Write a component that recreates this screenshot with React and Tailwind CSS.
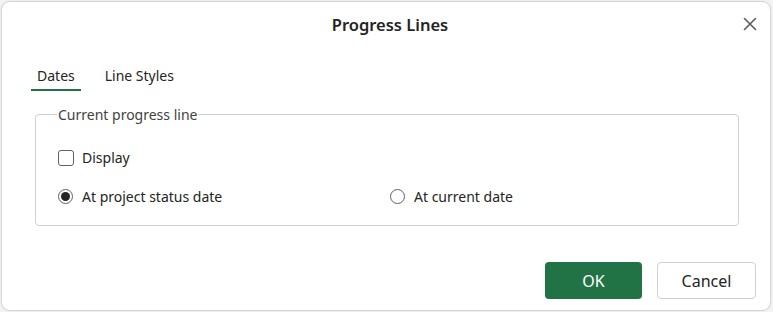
import React from 'react';

const font = { fontFamily: '"Segoe UI", "Noto Sans", "Liberation Sans", sans-serif' };

function Radio({ checked, label }) {
  return (
    <label className="flex items-center gap-[9px]">
      <span className="w-[15px] h-[15px] rounded-full border border-[#616161] flex items-center justify-center">
        {checked && <span className="w-[9px] h-[9px] rounded-full bg-[#242424]" />}
      </span>
      <span className="text-[14px] text-[#242424]">{label}</span>
    </label>
  );
}

export default function App() {
  return (
    <div className="w-[773px] h-[312px] bg-[#f3f3f3] p-[2px] pr-[3px] pb-[2px]" style={font}>
      <div className="h-full bg-white rounded-[8px] shadow-[0_0_0_1px_#d6d6d6,0_0_3px_rgba(0,0,0,0.15)] flex flex-col">
        <div className="relative h-[47px] flex items-center justify-center pl-[8px]">
          <span className="text-[16.5px] font-semibold text-[#242424]">Progress Lines</span>
          <button className="absolute right-[12px] top-[14px] w-[16px] h-[16px] flex items-center justify-center">
            <svg width="14" height="14" viewBox="0 0 14 14" fill="none" stroke="#5c5c5c" strokeWidth="1.6" strokeLinecap="round">
              <path d="M1.5 1.5L12.5 12.5M12.5 1.5L1.5 12.5" />
            </svg>
          </button>
        </div>
        <div className="flex pl-[29px] mt-[16px] gap-[6px]">
          <div className="px-[6px] pb-[3px] border-b-2 border-[#217346] text-[14px] text-[#242424]">Dates</div>
          <div className="px-[18px] pb-[3px] text-[14px] text-[#242424]">Line Styles</div>
        </div>
        <fieldset className="ml-[33px] mr-[31px] mt-[13px] border border-[#d1d1d1] rounded-[4px] pl-[22px] pr-[20px] pt-[22px] pb-[18px]">
          <legend className="px-[1px] -ml-[1px] text-[14px] text-[#424242]">Current progress line</legend>
          <label className="flex items-center gap-[8px]">
            <span className="w-[16px] h-[16px] rounded-[3px] border border-[#616161]" />
            <span className="text-[14px] text-[#242424]">Display</span>
          </label>
          <div className="flex mt-[18px]">
            <div className="w-[332px]"><Radio checked label="At project status date" /></div>
            <Radio label="At current date" />
          </div>
        </fieldset>
        <div className="flex justify-end gap-[15px] mt-auto mb-[11px] pr-[14px]">
          <button className="w-[97px] h-[37px] rounded-[4px] bg-[#217346] text-white text-[16px]">OK</button>
          <button className="w-[99px] h-[37px] rounded-[4px] border border-[#d1d1d1] bg-white text-[#242424] text-[16px]">Cancel</button>
        </div>
      </div>
    </div>
  );
}
